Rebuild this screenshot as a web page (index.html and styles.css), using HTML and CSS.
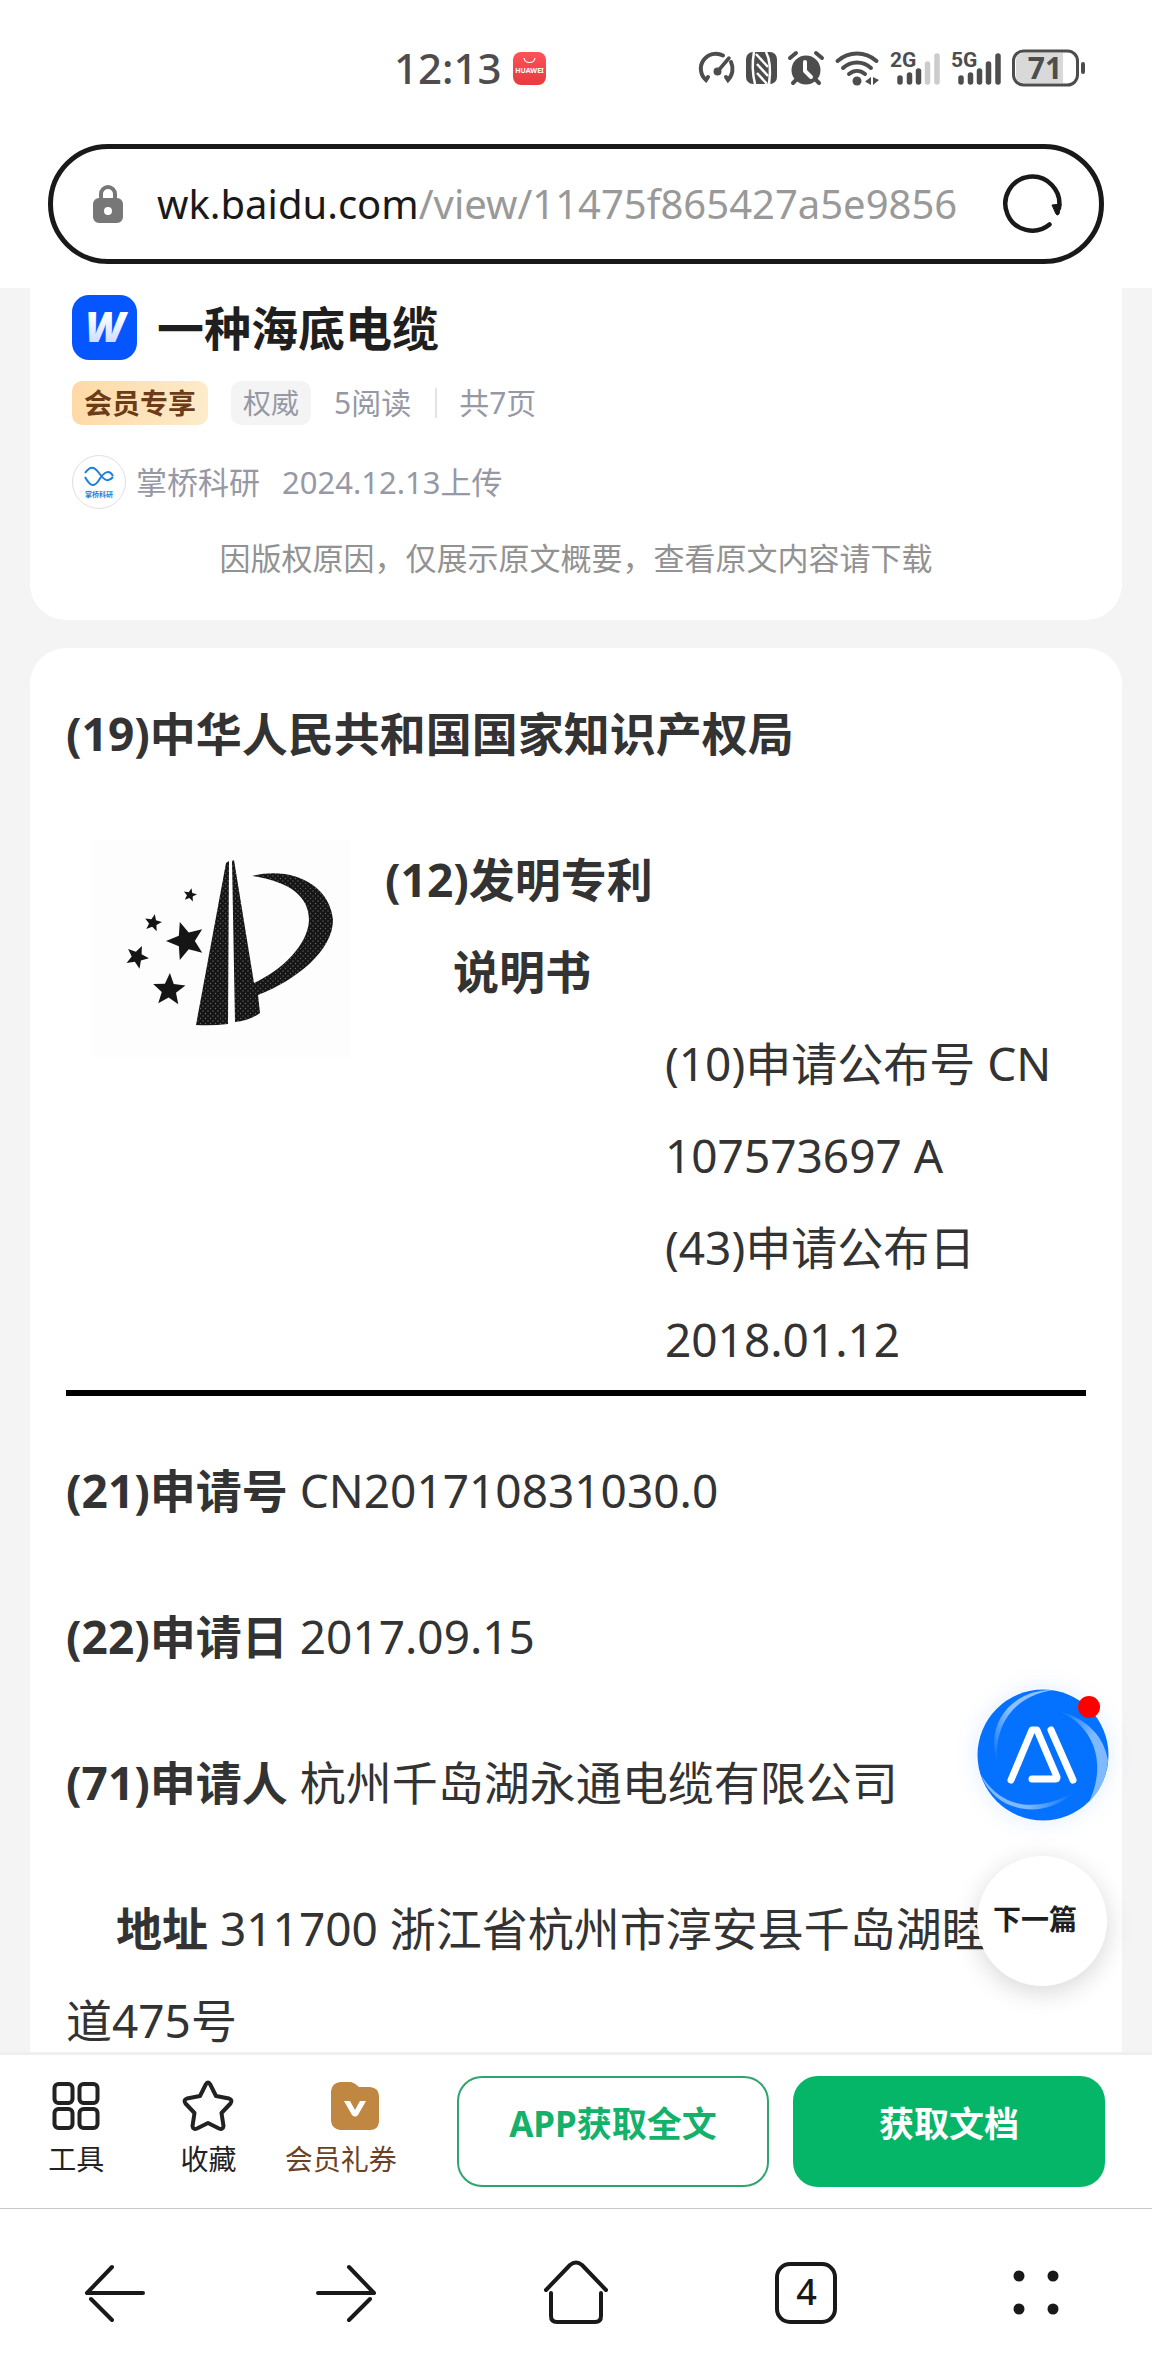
FILE: index.html
```html
<!DOCTYPE html>
<html lang="zh-CN">
<head>
    <meta charset="UTF-8">
    <meta name="viewport" content="width=device-width, initial-scale=1.0">
    <title>一种海底电缆</title>
    <link rel="stylesheet" href="styles.css">
</head>
<body>
    <header class="status-bar">
        <div class="status-left">
            <span class="time">12:13</span>
            <svg width="33" height="33" viewBox="0 0 33 33">
                <defs>
                    <linearGradient id="hw" x1="0" y1="0" x2="0" y2="1">
                        <stop offset="0" stop-color="#fb5458"/>
                        <stop offset="1" stop-color="#e83a40"/>
                    </linearGradient>
                </defs>
                <rect width="33" height="33" rx="8" fill="url(#hw)"/>
                <path d="M11 6c1 6 10 6 11 0" fill="none" stroke="#fff" stroke-width="1.2"/>
                <text x="16.5" y="21" class="hw-text">HUAWEI</text>
            </svg>
        </div>
        <div class="status-right">
            <svg width="36" height="34" viewBox="0 0 36 34" fill="none" stroke="#4d4d4d" stroke-width="4" stroke-linecap="round">
                <path d="M24 4.500A15 15 0 0 0 7 29l2-3M32 11a16 16 0 0 1-3 18l-2-3"/>
                <path d="M19 20L30 7" stroke-width="3.500"/>
                <circle cx="18.500" cy="20.500" r="2.500" fill="#4d4d4d" stroke-width="3"/>
            </svg>
            <svg width="31" height="34" viewBox="0 0 31 34">
                <rect x="0" y="1" width="31" height="32" rx="7" fill="#4d4d4d"/>
                <g fill="none" stroke="#fff">
                    <path d="M8 1Q5 17 9 33" stroke-width="2.500"/>
                    <path d="M20 1Q26 12 23 33" stroke-width="2.500"/>
                    <path d="M10 3L22 16M11 13L22 25M11 22L21 33" stroke-width="2.500"/>
                </g>
            </svg>
            <svg width="36" height="34" viewBox="0 0 36 34">
                <circle cx="18" cy="19" r="14.500" fill="#4d4d4d"/>
                <path d="M2 7l6-5M34 7l-6-5M5 32l4-4M31 32l-4-4" stroke="#4d4d4d" stroke-width="4" stroke-linecap="round"/>
                <path d="M17 11v9l6 6" fill="none" stroke="#fff" stroke-width="4" stroke-linecap="round" stroke-linejoin="round"/>
            </svg>
            <svg width="44" height="36" viewBox="0 0 44 36" fill="none" stroke="#4d4d4d" stroke-width="4" stroke-linecap="round">
                <path d="M2.500 11C14 1 30 1 41.500 11M8 18c8-7.500 20-7.500 28 0M14 24c5-4 11-4 16 0"/>
                <circle cx="22" cy="31" r="4.500" fill="#4d4d4d" stroke="none"/>
                <path d="M36 27v8l-6-3.500zM38 27v8l6-5z" fill="#4d4d4d" stroke="none"/>
            </svg>
            <svg class="signal" width="50" height="36" viewBox="0 0 50 36">
                <text x="0" y="17" class="net">2G</text>
                <path d="M10 28v4M19.500 25v7M28.500 21v11"/>
                <path class="off" d="M37.500 14v18M47 6v26"/>
            </svg>
            <svg class="signal" width="50" height="36" viewBox="0 0 50 36">
                <text x="0" y="17" class="net">5G</text>
                <path d="M10 28v4M19.500 25v7M28.500 21v11M37.500 14v18M47 6v26"/>
            </svg>
            <svg width="74" height="38" viewBox="0 0 74 38">
                <path d="M11 4h40v30H11a7 7 0 0 1-7-7V11a7 7 0 0 1 7-7z" fill="#d9d9d9"/>
                <rect x="1.500" y="2" width="64" height="34" rx="10" fill="none" stroke="#4d4d4d" stroke-width="3"/>
                <path d="M71 15v8" stroke="#4d4d4d" stroke-width="4" stroke-linecap="round"/>
                <text x="33" y="30" class="batt">71</text>
            </svg>
        </div>
    </header>

    <div class="address">
        <div class="pill">
            <svg width="30" height="40" viewBox="0 0 30 40">
                <path d="M8 17V10a7 7 0 0 1 14 0v7" fill="none" stroke="#777" stroke-width="4"/>
                <path fill-rule="evenodd" d="M6 14h18a6 6 0 0 1 6 6v13a6 6 0 0 1-6 6H6a6 6 0 0 1-6-6V20a6 6 0 0 1 6-6zM15 23a4 4 0 0 0 0 8a4 4 0 0 0 0-8z" fill="#777"/>
            </svg>
            <button class="url" type="button"><b>wk.baidu.com</b>/view/11475f865427a5e9856</button>
            <button class="reload" type="button" aria-label="刷新">
                <svg width="60" height="60" viewBox="0 0 60 60">
                    <path d="M56 34A27 27 0 1 0 46.500 50.500" fill="none" stroke="#191919" stroke-width="4.500" stroke-linecap="round"/>
                    <path d="M49 31l9-1l-2 10q-2 2-3 0z" fill="#191919" stroke="#191919" stroke-linejoin="round"/>
                </svg>
            </button>
        </div>
    </div>

    <main>
        <section class="card info">
            <div class="title-row">
                <svg width="65" height="65" viewBox="0 0 65 65">
                    <defs>
                        <linearGradient id="wg" x1="0" y1="0" x2="0" y2="1">
                            <stop offset="0.300" stop-color="#fff"/>
                            <stop offset="1" stop-color="#b9ceff"/>
                        </linearGradient>
                    </defs>
                    <rect width="65" height="65" rx="17" fill="#0556ff"/>
                    <text x="33" y="47" class="w-text" fill="url(#wg)">W</text>
                </svg>
                <h1>一种海底电缆</h1>
            </div>
            <div class="tags">
                <span class="tag vip">会员专享</span>
                <span class="tag">权威</span>
                <span class="reads">5阅读</span>
                <span class="pages">共7页</span>
            </div>
            <div class="author">
                <svg width="54" height="54" viewBox="0 0 54 54">
                    <circle cx="27" cy="27" r="26.500" fill="#fff" stroke="#dfdfdf"/>
                    <path d="M13 18c5-7 9-7 14 0s9 10 14 4M13 22c5 9 9 11 14 3s10-11 14-4" fill="none" stroke="#1f7fd6" stroke-width="2"/>
                    <text x="27" y="42" class="logo-text">掌桥科研</text>
                </svg>
                <span>掌桥科研</span>
                <span class="date">2024.12.13上传</span>
            </div>
            <p class="notice">因版权原因，仅展示原文概要，查看原文内容请下载</p>
        </section>

        <article class="card doc">
            <h2>(19)中华人民共和国国家知识产权局</h2>
            <div class="masthead">
                <svg class="patent-logo" width="258" height="217" viewBox="0 0 258 217" fill="#151515">
                    <defs>
                        <path id="star" d="M0-10L2.600-3.600L9.500-3.100L4.200 1.400L5.900 8.100L0 4.400L-5.900 8.100L-4.200 1.400L-9.500-3.100L-2.600-3.600z"/>
                        <pattern id="dots" width="5" height="5" patternUnits="userSpaceOnUse">
                            <rect width="5" height="5" fill="#151515"/>
                            <circle cx="1" cy="1" r="0.700" fill="#666"/>
                            <circle cx="3.500" cy="3.500" r="0.700" fill="#666"/>
                        </pattern>
                    </defs>
                    <rect width="258" height="217" fill="#fdfdfd"/>
                    <g fill="url(#dots)">
                        <path d="M134 23l3-2L136 184Q120 186 104 185z"/>
                        <path d="M140 21l2-1L162 143C190 130 216 105 217 80C217 58 200 42 160 36C200 26 238 45 241 80C241 110 205 140 166 155L168 173Q157 181 143 182z"/>
                    </g>
                    <use href="#star" transform="translate(98 55) rotate(12) scale(0.700)"/>
                    <use href="#star" transform="translate(61 83) rotate(12) scale(0.900)"/>
                    <use href="#star" transform="translate(94 101) rotate(-18) scale(2)"/>
                    <use href="#star" transform="translate(45 117) rotate(24) scale(1.200)"/>
                    <use href="#star" transform="translate(77 150) rotate(3) scale(1.700)"/>
                </svg>
                <div class="masthead-text">
                    <h2>(12)发明专利</h2>
                    <h2 class="sub">说明书</h2>
                    <p class="pub">(10)申请公布号 CN 107573697 A</p>
                    <p class="pub">(43)申请公布日 2018.01.12</p>
                </div>
            </div>
            <hr>
            <p><b>(21)申请号</b> CN201710831030.0</p>
            <p><b>(22)申请日</b> 2017.09.15</p>
            <p><b>(71)申请人</b> 杭州千岛湖永通电缆有限公司</p>
            <p class="indent"><b>地址</b> 311700 浙江省杭州市淳安县千岛湖睦州大道475号</p>
        </article>

        <div class="floating">
            <button class="ai" type="button" aria-label="AI">
                <svg width="132" height="132" viewBox="0 0 132 132">
                    <defs>
                        <linearGradient id="s1" x1="1" y1="0" x2="0" y2="1">
                            <stop offset="0.500" stop-color="#8cc0ff"/>
                            <stop offset="1" stop-color="#0572ff"/>
                        </linearGradient>
                        <linearGradient id="s2" x1="0" y1="0" x2="0.600" y2="1">
                            <stop offset="0" stop-color="#0572ff"/>
                            <stop offset="0.500" stop-color="#7fb9ff"/>
                        </linearGradient>
                        <linearGradient id="s3" x1="0" y1="0" x2="1" y2="0">
                            <stop offset="0.500" stop-color="#7fb9ff"/>
                            <stop offset="1" stop-color="#0572ff"/>
                        </linearGradient>
                    </defs>
                    <circle cx="66" cy="66" r="65.500" fill="#0572ff"/>
                    <path d="M76 1C35 0 8 35 20 71C18 36 35 8 76 1z" fill="url(#s1)"/>
                    <path d="M82 22C112 30 128 50 131 72Q129 96 112 113C130 75 118 38 82 22z" fill="url(#s2)"/>
                    <path d="M4 86C16 120 62 134 96 104C62 122 26 122 4 86z" fill="url(#s3)"/>
                    <path d="M34 91L55 41H60L80 88Q80 90 78 90H55M74 41L96 91" fill="none" stroke="#fff" stroke-width="7" stroke-linecap="round" stroke-linejoin="round"/>
                </svg>
                <span class="dot"></span>
            </button>
            <button class="next" type="button">下一篇</button>
        </div>
    </main>

    <div class="actions">
        <div class="tools">
            <button class="tool" type="button">
                <svg width="50" height="52" viewBox="0 0 50 52" fill="none" stroke="#222" stroke-width="4">
                    <rect x="3.500" y="4" width="18" height="19" rx="4"/>
                    <rect x="28.500" y="4" width="18" height="19" rx="4"/>
                    <rect x="3.500" y="29" width="18" height="19" rx="4"/>
                    <rect x="28.500" y="29" width="18" height="19" rx="4"/>
                </svg>
                工具
            </button>
            <button class="tool" type="button">
                <svg width="52" height="52" viewBox="0 0 52 52" fill="none" stroke="#222" stroke-width="4" stroke-linejoin="round">
                    <path d="M24 4Q26 1 28 4L34 16L47 18.500Q51 20 48.500 23.500L39.500 33L41.500 46Q41 50 37 48.500L26 43L15 48.500Q11 50 10.500 46L12.500 33L3.500 23.500Q1 20 5 18.500L18 16z"/>
                </svg>
                收藏
            </button>
            <button class="tool gift" type="button">
                <svg class="coupon" width="48" height="52" viewBox="0 0 48 52">
                    <path d="M9 2H20Q24 3 28 7H39Q48 8 48 16V42Q47 50 39 50H9Q1 49 0 41V11Q1 3 9 2z" fill="#c08743"/>
                    <path d="M13 21H19L24 30L29 21H35L27 35Q24 38 21 35z" fill="#fff"/>
                </svg>
                会员礼券
            </button>
        </div>
        <button class="btn" type="button">APP获取全文</button>
        <button class="btn primary" type="button">获取文档</button>
    </div>

    <nav class="browser-nav">
        <button type="button" aria-label="后退">
            <svg width="64" height="64" viewBox="0 0 64 64">
                <path d="M29 6L4 32H60M8 38L29 59"/>
            </svg>
        </button>
        <button type="button" aria-label="前进">
            <svg width="64" height="64" viewBox="0 0 64 64">
                <path d="M35 6L60 32H4M56 38L35 59"/>
            </svg>
        </button>
        <button type="button" aria-label="主页">
            <svg width="68" height="64" viewBox="0 0 68 64">
                <path d="M4 29L28 4Q34-1 40 4L64 29M9 32V55Q9 61 15 61H53Q59 61 59 55V32"/>
            </svg>
        </button>
        <button type="button"><span class="tabs">4</span></button>
        <button type="button" aria-label="菜单">
            <svg class="menu" width="64" height="64" viewBox="0 0 64 64">
                <circle cx="14" cy="15" r="5.500"/>
                <circle cx="48" cy="15" r="5.500"/>
                <circle cx="14" cy="48" r="5.500"/>
                <circle cx="48" cy="48" r="5.500"/>
            </svg>
        </button>
    </nav>
</body>
</html>
```
FILE: styles.css
```css
* {
    box-sizing: border-box;
}
body {
    margin: 0;
    height: 100vh;
    display: flex;
    flex-direction: column;
    background: #fff;
    color: #333;
    font-family: "Noto Sans", "Noto Sans CJK SC", sans-serif;
}
svg {
    display: block;
    flex-shrink: 0;
    overflow: visible;
}
button {
    background: none;
    border: none;
    padding: 0;
    color: inherit;
    font-family: inherit;
    cursor: pointer;
}
h1, h2, p {
    margin: 0;
}

/* phone status bar */
.status-bar {
    height: 136px;
    flex-shrink: 0;
    display: flex;
    align-items: center;
    justify-content: space-between;
    padding: 0 66px 0 394px;
}
.status-left, .status-right {
    display: flex;
    align-items: center;
    gap: 11px;
}
.time {
    font-size: 42px;
    line-height: 48px;
    font-weight: 500;
    color: #4d4d4d;
}
.hw-text {
    font-size: 7px;
    font-weight: bold;
    fill: #fff;
    text-anchor: middle;
}
.signal path {
    stroke: #4d4d4d;
    stroke-width: 5.5;
    stroke-linecap: round;
}
.signal .off {
    stroke: #ccc;
}
.net {
    font-family: Roboto, sans-serif;
    font-size: 21px;
    font-weight: bold;
    fill: #4d4d4d;
}
.batt {
    font-size: 30px;
    font-weight: bold;
    fill: #4d4d4d;
    text-anchor: middle;
}

/* address bar */
.address {
    flex-shrink: 0;
    padding: 8px 48px 24px;
}
.pill {
    height: 120px;
    display: flex;
    align-items: center;
    border: 5px solid #191919;
    border-radius: 60px;
    padding: 0 36px 0 40px;
}
.url {
    flex: 1;
    min-width: 0;
    margin: 0 42px 0 34px;
    overflow: hidden;
    white-space: nowrap;
    text-align: left;
    font-size: 40px;
    line-height: 56px;
    color: #999;
}
.url b {
    font-weight: normal;
    color: #191919;
}

/* page */
main {
    position: relative;
    flex: 1;
    min-height: 0;
    overflow: hidden;
    background: #f4f4f4;
    padding: 0 30px;
}
.card {
    background: #fff;
    border-radius: 36px;
}
.info {
    border-top-left-radius: 0;
    border-top-right-radius: 0;
    padding: 7px 42px 38px;
    color: #9699a5;
}
.title-row {
    display: flex;
    align-items: center;
    gap: 20px;
}
.title-row h1 {
    font-size: 47px;
    line-height: 64px;
    color: #1f1f1f;
}
.w-text {
    font-size: 42px;
    font-weight: 900;
    font-style: italic;
    text-anchor: middle;
}
.tags {
    display: flex;
    align-items: center;
    margin-top: 21px;
    font-size: 30px;
    line-height: 44px;
}
.tag {
    background: #f4f4f4;
    border-radius: 10px;
    padding: 0 12px;
    margin-right: 23px;
    font-size: 28px;
}
.vip {
    background: linear-gradient(100deg, #ffd9a6, #fdeccb);
    color: #6b3c17;
    font-weight: bold;
}
.pages {
    margin-left: 24px;
    padding-left: 24px;
    background: linear-gradient(#e4e4e8, #e4e4e8) left center / 2px 30px no-repeat;
}
.author {
    display: flex;
    align-items: center;
    margin-top: 30px;
    font-size: 31px;
    line-height: 54px;
}
.author svg {
    margin-right: 10px;
}
.date {
    margin-left: 22px;
}
.logo-text {
    font-size: 7px;
    font-weight: bold;
    fill: #1f7fd6;
    text-anchor: middle;
}
.notice {
    margin-top: 25px;
    font-size: 31px;
    line-height: 48px;
    color: #929292;
    text-align: center;
}

/* patent document */
.doc {
    margin-top: 28px;
    padding: 39px 36px 80px;
    font-size: 46px;
    line-height: 92px;
}
.doc h2 {
    font-size: 46px;
    line-height: 92px;
}
.doc > p, .masthead {
    margin-top: 54px;
}
.masthead {
    display: flex;
    gap: 35px;
    padding-left: 26px;
}
.patent-logo {
    margin-top: 7px;
}
.masthead-text {
    flex: 1;
}
.sub {
    padding-left: 68px;
}
.pub {
    padding-left: 280px;
}
hr {
    margin: 5px 0 0;
    border: none;
    height: 6px;
    background: #000;
}
.doc > hr + p {
    margin-top: 48px;
}
.indent {
    text-indent: 50px;
}

/* buttons over the page */
.floating {
    position: absolute;
    right: 43px;
    bottom: 66px;
    display: flex;
    flex-direction: column;
    gap: 35px;
}
.ai {
    position: relative;
    border-radius: 50%;
    box-shadow: 0 0 24px rgba(5, 114, 255, 0.12);
}
.dot {
    position: absolute;
    top: 7px;
    right: 9px;
    width: 22px;
    height: 22px;
    border-radius: 50%;
    background: #f00;
}
.next {
    width: 130px;
    height: 130px;
    padding: 0 14px 6px 0;
    border-radius: 50%;
    background: #fff;
    box-shadow: 0 6px 26px rgba(0, 0, 0, 0.16);
    font-size: 28px;
    font-weight: bold;
    color: #1f1f1f;
}

/* document actions */
.actions {
    flex-shrink: 0;
    display: flex;
    align-items: flex-start;
    gap: 24px;
    height: 156px;
    padding: 21px 47px 0 10px;
    border-top: 3px solid #efefef;
}
.tools {
    flex: 1;
    display: grid;
    grid-template-columns: repeat(3, 1fr);
    padding-right: 26px;
}
.tool {
    display: flex;
    flex-direction: column;
    align-items: center;
    gap: 7px;
    padding-top: 4px;
    font-size: 28px;
    line-height: 40px;
    color: #222;
}
.gift {
    color: #6b4226;
}
.coupon {
    margin-left: 28px;
}
.btn {
    width: 312px;
    height: 111px;
    padding-bottom: 20px;
    border: 2px solid #2ea56d;
    border-radius: 25px;
    font-size: 35px;
    font-weight: bold;
    color: #14b16a;
}
.primary {
    background: #06b668;
    border-color: #06b668;
    color: #fff;
}

/* browser toolbar */
.browser-nav {
    flex-shrink: 0;
    display: flex;
    height: 168px;
    border-top: 1px solid #c8c8c8;
}
.browser-nav button {
    flex: 1;
    display: flex;
    align-items: center;
    justify-content: center;
}
.browser-nav path {
    fill: none;
    stroke: #191919;
    stroke-width: 4;
    stroke-linecap: round;
    stroke-linejoin: round;
}
.menu {
    fill: #191919;
}
.tabs {
    width: 62px;
    height: 62px;
    border: 4px solid #191919;
    border-radius: 15px;
    font-size: 36px;
    line-height: 52px;
    font-weight: 500;
    color: #191919;
}
```
